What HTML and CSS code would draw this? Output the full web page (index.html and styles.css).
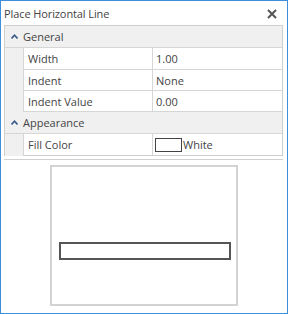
FILE: index.html
```html
<!DOCTYPE html>
<html lang="en">
<head>
  <meta charset="UTF-8" />
  <title>Place Horizontal Line</title>
  <link rel="stylesheet" href="styles.css">
</head>
<body>
  <div class="window">
    <div class="titlebar">
      <span class="title">Place Horizontal Line</span>
      <span class="close">
        <svg width="10" height="10" viewBox="0 0 10 10"><path d="M1 1 L9 9 M9 1 L1 9" stroke="#555" stroke-width="2"/></svg>
      </span>
    </div>

    <div class="grid">
      <div class="row category">
        <span class="toggle"><svg width="7" height="5" viewBox="0 0 7 5"><path d="M0.5 4.5 L3.5 1.2 L6.5 4.5" fill="none" stroke="#3b5a8a" stroke-width="1.6"/></svg></span>
        <span>General</span>
      </div>
      <div class="row prop">
        <span class="gutter"></span>
        <span class="name">Width</span>
        <span class="value">1.00</span>
      </div>
      <div class="row prop short">
        <span class="gutter"></span>
        <span class="name">Indent</span>
        <span class="value">None</span>
      </div>
      <div class="row prop short">
        <span class="gutter"></span>
        <span class="name">Indent Value</span>
        <span class="value">0.00</span>
      </div>
      <div class="row category">
        <span class="toggle"><svg width="7" height="5" viewBox="0 0 7 5"><path d="M0.5 4.5 L3.5 1.2 L6.5 4.5" fill="none" stroke="#3b5a8a" stroke-width="1.6"/></svg></span>
        <span>Appearance</span>
      </div>
      <div class="row prop last">
        <span class="gutter"></span>
        <span class="name">Fill Color</span>
        <span class="value"><span class="swatch"></span>White</span>
      </div>
    </div>

    <div class="divider"></div>

    <div class="preview">
      <div class="line-sample"></div>
    </div>
  </div>
</body>
</html>
```

FILE: styles.css
```css
body {
  margin: 0;
  background: #ffffff;
  font-family: 'Open Sans', 'Noto Sans', sans-serif;
  color: #444;
}
.window {
  width: 288px;
  height: 314px;
  box-sizing: border-box;
  border: 1px solid #3d8fdc;
  background: #fff;
}
.titlebar {
  height: 24px;
  display: flex;
  align-items: center;
  justify-content: space-between;
  padding: 0 10px 0 3px;
}
.title {
  font-size: 11px;
  color: #444;
  letter-spacing: -0.1px;
}
.close {
  display: flex;
  margin-top: 2px;
}
.grid {
  margin: 0 4px 0 3px;
  border: 1px solid #cfcfcf;
  font-size: 11px;
}
.row {
  display: flex;
  align-items: center;
  height: 21px;
  border-bottom: 1px solid #d6d6d6;
}
.row.short {
  height: 20px;
}
.row.last {
  border-bottom: none;
}
.category {
  background: #f0f0f0;
  color: #444;
}
.toggle {
  width: 18px;
  display: flex;
  justify-content: center;
  padding-bottom: 1px;
}
.prop {
  background: #fff;
  border-bottom-color: #d6d6d6;
}
.gutter {
  width: 18px;
  align-self: stretch;
  background: #f0f0f0;
  margin-bottom: -1px;
}
.name {
  width: 124px;
  padding-left: 4px;
  align-self: stretch;
  display: flex;
  align-items: center;
  border-left: 1px solid #d6d6d6;
  border-right: 1px solid #d6d6d6;
}
.value {
  flex: 1;
  padding-left: 3px;
  display: flex;
  align-items: center;
}
.swatch {
  width: 25px;
  height: 12px;
  border: 1.5px solid #444;
  background: #fff;
  margin-right: 1px;
  margin-left: -1px;
}
.divider {
  margin: 3px 4px 0 3px;
  border-top: 1px solid #d0d0d0;
}
.preview {
  width: 184px;
  height: 137px;
  margin: 5px auto 0;
  border: 2px solid #d3d3d3;
  padding-top: 75px;
  box-sizing: border-box;
  height: 141px;
  width: 188px;
}
.line-sample {
  width: 168px;
  height: 14px;
  margin-left: 7px;
  border: 2px solid #555;
}
```
